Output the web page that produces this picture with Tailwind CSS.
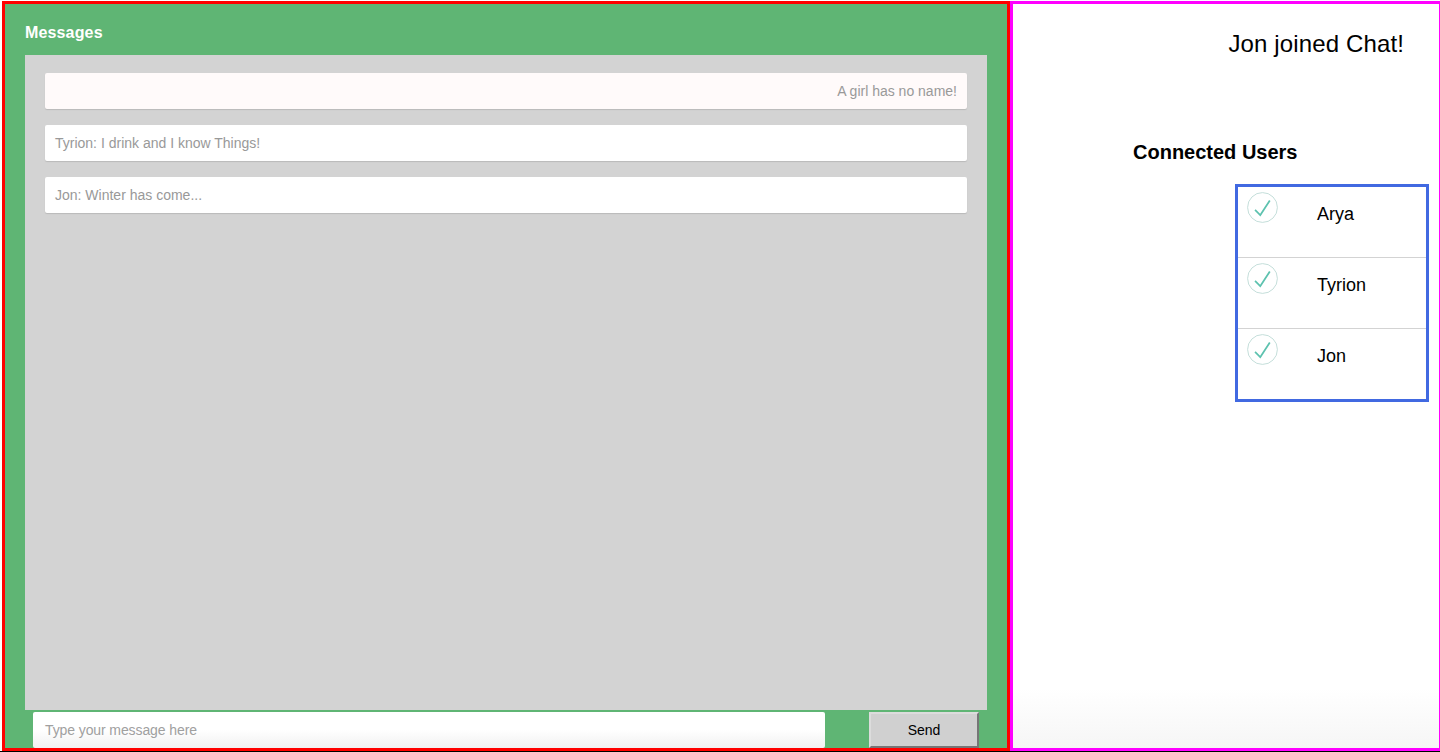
<!DOCTYPE html>
<html lang="en">
  <head>
    <meta charset="UTF-8" />
    <title>Chat</title>
    <script src="https://cdn.jsdelivr.net/npm/@tailwindcss/browser@4"></script>
  </head>
  <body class="bg-white text-black font-['Liberation_Sans',Arial,sans-serif] overflow-hidden">
    <div class="flex h-[752px] pt-px pl-[2px] border-b border-black">
      <!-- messages column -->
      <section class="w-[1008px] h-[750px] border-[3px] border-[#ff0000] bg-[#5fb574] flex flex-col">
        <h2 class="ml-[20px] mt-[19px] h-[32px] text-base leading-[20px] tracking-[0.15px] font-bold text-white">Messages</h2>
        <div class="ml-[20px] w-[962px] h-[655px] bg-[#d3d3d3] px-[20px] pt-[18px] flex flex-col gap-4">
          <div class="h-9 shrink-0 rounded-[2px] bg-[#fffafa] shadow-[0_1px_1px_rgba(0,0,0,0.12)] px-[10px] text-right text-sm leading-9 text-[#999999]">A girl has no name!</div>
          <div class="h-9 shrink-0 rounded-[2px] bg-white shadow-[0_1px_1px_rgba(0,0,0,0.12)] px-[10px] text-sm leading-9 text-[#999999]">Tyrion: I drink and I know Things!</div>
          <div class="h-9 shrink-0 rounded-[2px] bg-white shadow-[0_1px_1px_rgba(0,0,0,0.12)] px-[10px] text-sm leading-9 text-[#999999]">Jon: Winter has come...</div>
        </div>
        <div class="flex mt-[2px] ml-[28px]">
          <div class="w-[792px] h-9 rounded-[2px] bg-gradient-to-b from-white from-50% to-[#f1f1f1] px-3 text-sm leading-9 tracking-[-0.1px] text-[#a0a0a0]">Type your message here</div>
          <button class="ml-[44px] w-[110px] h-9 border-2 border-t-[#dcdcdc] border-l-[#dcdcdc] border-r-[#767676] border-b-[#767676] bg-[#d0d0d0] text-sm text-black">Send</button>
        </div>
      </section>

      <!-- users column -->
      <aside class="flex-1 h-[750px] border-[3px] border-r border-[#ff00ff] bg-gradient-to-b from-white from-92% to-[#f6f6f6]">
        <p class="mt-[26px] pr-[35px] text-right text-2xl leading-[28px] tracking-[0.13px]">Jon joined Chat!</p>
        <h3 class="mt-[81px] ml-[120px] text-xl leading-[26px] font-bold">Connected Users</h3>
        <ul class="mt-[19px] ml-[222px] w-[194px] h-[218px] border-[3px] border-[#4169e1]">
          <li class="flex h-[71px] border-b border-[#d3d3d3] pl-[9px] pt-[5px]">
            <svg class="w-[31px] h-[31px] shrink-0" viewBox="-2 -2 104 104"><circle cx="50" cy="50" r="50" fill="none" stroke="#bddad5" stroke-width="3" /><path fill="#5dc2af" d="M72 25L42 71 27 56l-4 4 20 20 34-52z" /></svg>
            <span class="ml-[39px] mt-[10px] text-lg leading-[24px]">Arya</span>
          </li>
          <li class="flex h-[71px] border-b border-[#d3d3d3] pl-[9px] pt-[5px]">
            <svg class="w-[31px] h-[31px] shrink-0" viewBox="-2 -2 104 104"><circle cx="50" cy="50" r="50" fill="none" stroke="#bddad5" stroke-width="3" /><path fill="#5dc2af" d="M72 25L42 71 27 56l-4 4 20 20 34-52z" /></svg>
            <span class="ml-[39px] mt-[10px] text-lg leading-[24px]">Tyrion</span>
          </li>
          <li class="flex h-[71px] pl-[9px] pt-[5px]">
            <svg class="w-[31px] h-[31px] shrink-0" viewBox="-2 -2 104 104"><circle cx="50" cy="50" r="50" fill="none" stroke="#bddad5" stroke-width="3" /><path fill="#5dc2af" d="M72 25L42 71 27 56l-4 4 20 20 34-52z" /></svg>
            <span class="ml-[39px] mt-[10px] text-lg leading-[24px]">Jon</span>
          </li>
        </ul>
      </aside>
    </div>
  </body>
</html>
